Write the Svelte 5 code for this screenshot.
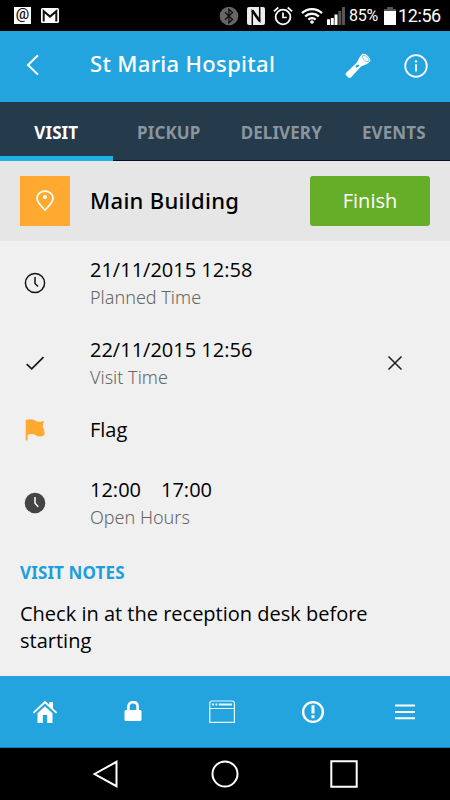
<script>
  const tabs = ['VISIT', 'PICKUP', 'DELIVERY', 'EVENTS'];
  const rows = [
    { icon: 'clock', title: '21/11/2015 12:58', sub: 'Planned Time' },
    { icon: 'check', title: '22/11/2015 12:56', sub: 'Visit Time', close: true },
    { icon: 'flag', title: 'Flag' },
    { icon: 'clockfill', title: '12:00', end: '17:00', sub: 'Open Hours' }
  ];
</script>

<div class="screen">
  <div class="status">
    <span class="at">@</span>
    <svg class="gmail" width="18" height="15" viewBox="0 0 18 15"><rect width="18" height="15" rx="1.5" fill="#fff"/><path d="M2.7 13.5V3.2L9 8.6l6.3-5.4v10.3" fill="none" stroke="#111" stroke-width="2"/></svg>
    <svg class="bt" width="20" height="20" viewBox="0 0 20 20"><circle cx="10" cy="10" r="9.3" fill="#666"/><path d="M6 6.3l7.5 7.2-3.6 3.2V3.3l3.6 3.2L6 13.7" fill="none" stroke="#111" stroke-width="1.3"/></svg>
    <svg class="nfc" width="18" height="18" viewBox="0 0 18 18"><rect width="18" height="18" rx="2" fill="#eee"/><path d="M5.300 18V4l7.400 10V0" fill="none" stroke="#080808" stroke-width="1.500"/><path d="M5.300 3.500l7.400 10.500" stroke="#080808" stroke-width="2.600"/></svg>
    <svg class="alarm" width="20" height="20" viewBox="0 0 20 20" fill="none" stroke="#fff"><circle cx="10" cy="11" r="7.4" stroke-width="1.8"/><path d="M10 6.500v5h3.700M.9 5.300l4.400-3.800M19.100 5.300l-4.400-3.800" stroke-width="1.7"/></svg>
    <svg class="wifi" width="22" height="17" viewBox="0 0 22 17" fill="none" stroke="#fff" stroke-width="2.3"><path d="M1 6.1a14.5 14.5 0 0120 0M4.2 9.5a9.8 9.8 0 0113.6 0M7.4 12.7a5.2 5.2 0 017.2 0"/><circle cx="11" cy="15" r="1.8" fill="#fff" stroke="none"/></svg>
    <svg class="signal" width="19" height="18" viewBox="0 0 19 18"><path d="M0 12.3h3V18H0zM3.8 11h3v7h-3zM7.5 7.5h3V18h-3z" fill="#fff"/><path d="M11.3 4h3v14h-3zM15 0h3v18h-3z" fill="#555"/></svg>
    <span class="pct">85%</span>
    <svg class="batt" width="12" height="18" viewBox="0 0 12 18"><path d="M0 2h3V0h6v2h3v4H0z" fill="#555"/><path d="M0 4h12v14H0z" fill="#fff"/></svg>
    <span class="time">12:56</span>
  </div>

  <header>
    <svg class="back" width="14" height="22" viewBox="0 0 14 22" fill="none" stroke="#fff" stroke-width="2"><path d="M12 1.200L2 11l10 9.600"/></svg>
    <h1>St Maria Hospital</h1>
    <svg class="torch" width="26" height="26" viewBox="0 0 26 26"><path d="M1.200 19.700L11.800 9.600 14.800 4 17.500.6Q23 1.200 25.500 8l-3.500 3-6 2.600L6.200 24.300Q4.700 25.600 3.400 24.400L1 22.200Q0 21 1.200 19.700z" fill="#fff"/><ellipse cx="21" cy="5.300" rx="4.900" ry="3" transform="rotate(45 21 5.300)" fill="#fff"/><ellipse cx="20.700" cy="5.600" rx="4" ry="2" transform="rotate(45 20.700 5.600)" fill="#fff" stroke="#24a4de" stroke-width=".6"/><ellipse cx="12.300" cy="13" rx="1.900" ry="1.200" transform="rotate(-30 12.300 13)" fill="#24a4de"/></svg>
    <svg class="info" width="24" height="24" viewBox="0 0 24 24"><circle cx="12" cy="12" r="10.8" fill="none" stroke="#fff" stroke-width="1.8"/><path d="M12 10.300v7.200" stroke="#fff" stroke-width="1.8"/><circle cx="12" cy="7.400" r="1.200" fill="#fff"/></svg>
  </header>

  <nav class="tabs">
    {#each tabs as tab, i}
      <div class="tab" class:active={i === 0}><span>{tab}</span></div>
    {/each}
  </nav>

  <section class="place">
    <div class="pin"><svg width="18" height="22" viewBox="0 0 18 22"><path d="M9 20.2C6.5 17 1 13 1 8.3 1 4 4.8 1.2 9 1.2s8 2.8 8 7.1c0 4.700-5.500 8.700-8 11.900z" fill="none" stroke="#fff" stroke-width="1.7"/><circle cx="9" cy="7" r="2.100" fill="#fff"/></svg></div>
    <h2>Main Building</h2>
    <button>Finish</button>
  </section>

  <main>
    {#each rows as row}
      <div class="row" class:short={!row.sub}>
        <div class="icon">
          {#if row.icon === 'clock'}
            <svg width="22" height="22" viewBox="0 0 22 22" fill="none" stroke="#151515" stroke-width="1.5"><circle cx="11" cy="11" r="9.600"/><path d="M11 5v6.500l3 3"/></svg>
          {:else if row.icon === 'check'}
            <svg width="22" height="22" viewBox="0 0 22 22" fill="none" stroke="#151515" stroke-width="1.7"><path d="M2.700 12.200l5 4.700L19.500 5.200"/></svg>
          {:else if row.icon === 'flag'}
            <svg width="22" height="22" viewBox="0 0 22 22"><path d="M1.700 1.200Q1.700.4 2.800.5l.8.300Q7.500-.4 11 1.500q4 2.200 9.300.3-2.800 5-.5 8 1 3.500.7 6.200-4.200 3-8.500.4-4-2.300-8.400-.6v5Q3.600 21.500 2.500 21.500q-.8 0-.8-.8z" fill="#ffa931"/></svg>
          {:else}
            <svg width="22" height="22" viewBox="0 0 22 22"><circle cx="11" cy="11" r="10.300" fill="#444"/><path d="M11 5v6.300l3.300 3.500" fill="none" stroke="#fff" stroke-width="1.500"/></svg>
          {/if}
        </div>
        <div class="text">
          <div class="title">{row.title}{#if row.end}<span class="end">{row.end}</span>{/if}</div>
          {#if row.sub}<div class="sub">{row.sub}</div>{/if}
        </div>
        {#if row.close}
          <svg class="close" width="16" height="16" viewBox="0 0 16 16"><path d="M1.500 1.500l13 13m0-13l-13 13" stroke="#222" stroke-width="1.600"/></svg>
        {/if}
      </div>
    {/each}
    <h3>VISIT NOTES</h3>
    <p>Check in at the reception desk before starting</p>
  </main>

  <footer>
    <svg class="home" width="26" height="24" viewBox="0 0 26 24"><path d="M13 6.300l7.500 6.900V23h-5.300v-8h-4.400v8H5.500v-9.800zM.8 12.200L13 .8l4.200 4V2H21v6.400l4.200 3.800-1.200 1.300L13 3.400 2 13.500z" fill="#fff"/></svg>
    <svg class="lock" width="18" height="22" viewBox="0 0 18 22"><rect x=".5" y="9" width="17" height="11" rx="1.500" fill="#fff"/><path d="M4.400 10V5.800C4.400 2.700 6.200 1.200 9 1.200s4.600 1.500 4.600 4.600V10" fill="none" stroke="#fff" stroke-width="2.600"/></svg>
    <svg class="window" width="26" height="24" viewBox="0 0 26 24" fill="none" stroke="#e9f7fe" stroke-width="1.200"><path d="M.8 22.400V3.500Q.8 1 3 1h20q2.400 0 2.400 2.500v18.900zM.8 8.500h24.600"/><path d="M3 4.600h2m1.400 0h2m1.400 0H23" stroke-width="2"/></svg>
    <svg class="alert" width="24" height="24" viewBox="0 0 24 24"><circle cx="12" cy="12" r="9.900" fill="none" stroke="#fff" stroke-width="2.400"/><path d="M12 5.300v8.200m0 1.800v3" stroke="#fff" stroke-width="3"/></svg>
    <svg class="menu" width="20" height="18" viewBox="0 0 20 18"><path d="M0 2.500h20M0 9h20M0 15.200h20" stroke="#fff" stroke-width="2"/></svg>
  </footer>

  <div class="sysnav">
    <svg width="28" height="28" viewBox="0 0 28 28"><path d="M2.500 14L24.500 1.800v24.400z"/></svg>
    <svg width="28" height="28" viewBox="0 0 28 28"><circle cx="14" cy="14" r="12.500"/></svg>
    <svg width="28" height="28" viewBox="0 0 28 28"><path d="M1.300 1.300h25.400v25.400H1.300z"/></svg>
  </div>
</div>

<style>
  :global(body) { margin: 0; }
  * { box-sizing: border-box; }
  svg { display: block; flex: none; }
  h1, h2, h3, p { margin: 0; }
  .screen { width: 450px; height: 800px; display: flex; flex-direction: column; overflow: hidden; background: #f0f0f0; color: #000; font-family: 'Noto Sans', 'Open Sans', sans-serif; font-weight: 300; white-space: nowrap; }
  .status { height: 31px; flex: none; background: #000; color: #fff; display: flex; align-items: center; font-family: Roboto, sans-serif; font-weight: 400; }
  .at { width: 17px; height: 17px; margin-left: 14px; background: #fff; color: #111; font: 500 15px/15px Roboto, sans-serif; display: flex; justify-content: center; }
  .gmail { margin-left: 10px; }
  .bt { margin-left: 160px; }
  .nfc { margin-left: 8px; }
  .alarm { margin-left: 8px; }
  .wifi { margin-left: 8px; }
  .signal { margin-left: 4px; }
  .pct { margin-left: 3px; width: 32px; font-size: 16px; letter-spacing: -.3px; }
  .batt { margin-left: 3px; }
  .time { margin-left: 2px; font-size: 18px; letter-spacing: -.4px; }
  header { height: 70px; flex: none; background: #24a4de; display: flex; align-items: center; color: #fff; }
  .back { margin-left: 26px; margin-top: -2px; }
  h1 { margin-left: 50px; width: 255px; font-size: 22px; line-height: 30px; font-weight: 500; letter-spacing: .33px; margin-top: -6px; }
  .torch { margin-top: -1px; }
  .info { margin-left: 33px; margin-top: -1px; }
  .tabs { height: 60px; flex: none; display: flex; background: #253a4a; border-top: 1px solid #24a4de; border-bottom: 1px solid #080c2b; }
  .tab { width: 112.5px; height: 59px; display: flex; justify-content: center; align-items: center; color: #8a959d; font-size: 17px; font-weight: 700; letter-spacing: .1px; padding-top: 2px; }
  .tab.active { color: #fff; border-bottom: 5px solid #20b1e3; padding-top: 7px; }
  .place { height: 80px; flex: none; background: #e6e6e6; display: flex; align-items: center; padding: 0 20px; }
  .pin { width: 50px; height: 50px; background: #ffa931; display: flex; align-items: center; justify-content: center; }
  h2 { margin-left: 20px; font-size: 22px; font-weight: 500; letter-spacing: .3px; line-height: 30px; flex: 1; margin-top: -2px; }
  button { width: 120px; height: 50px; border: 0; border-radius: 3px; background: #66ae27; color: #fff; font: 400 20px/28px 'Open Sans', sans-serif; padding: 0 0 1px; }
  main { height: 435px; flex: none; }
  .row { height: 80px; display: flex; align-items: flex-start; }
  .row.short { height: 60px; }
  .icon { margin: 31px 0 0 24px; width: 66px; }
  .short .icon { margin-top: 18px; }
  .text { padding-top: 15px; width: 297px; }
  .title { font-family: 'Open Sans', sans-serif; font-size: 20px; line-height: 27px; font-weight: 400; }
  .end { margin-left: 20px; }
  .sub { font-size: 18px; line-height: 26px; color: #666; padding-top: 1px; }
  .close { margin-top: 34px; }
  h3 { margin: 20px 20px 0; font-size: 17px; line-height: 24px; font-weight: 700; letter-spacing: .12px; color: #1c9fdb; }
  p { margin: 15px 20px 0; font-family: 'Open Sans', sans-serif; font-size: 20px; line-height: 27px; font-weight: 400; white-space: normal; }
  footer { height: 72px; flex: none; background: #24a4de; border-bottom: 1px solid #167fae; display: flex; align-items: center; padding-left: 32px; }
  .lock { margin-left: 66px; }
  .window { margin-left: 67px; }
  .alert { margin-left: 66px; }
  .menu { margin-left: 70px; }
  .sysnav { height: 52px; flex: none; background: #000; display: flex; justify-content: center; align-items: center; gap: 91px; fill: none; stroke: #fff; stroke-width: 2; }
</style>
